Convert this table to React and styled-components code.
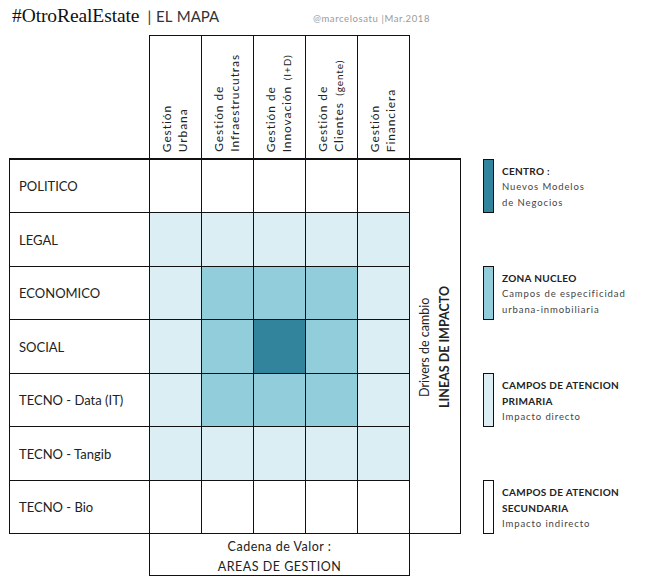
import React from 'react';
import styled, { createGlobalStyle } from 'styled-components';

const GlobalStyle = createGlobalStyle`
    html, body{
        margin:0;
        padding:0;
        background:#fff;
    }
    *{ box-sizing:border-box; }
`

const ROW_TEMPLATE = '53px 54px 53px 54px 53px 54px 53px';
const FILL = { w:'#ffffff', l:'#DAEEF3', m:'#92CDDC', d:'#31849B' };
const LINE = '#111';

const Page = styled.div`
    width:650px;
    height:580px;
    font-family:Lato, "Open Sans", sans-serif;
    color:#222;
    overflow:hidden;
`
const TopBar = styled.header`
    height:35px;
    width:430px;
    padding:5px 0 0 12px;
    display:flex;
    align-items:baseline;
`
const Title = styled.h1`
    margin:0;
    font-family:"Liberation Serif", serif;
    font-weight:400;
    font-size:19.5px;
    color:#111;
    letter-spacing:-0.1px;
`
const Subtitle = styled.span`
    margin-left:8px;
    font-size:15px;
    color:#333;
    word-spacing:1px;
`
const Credit = styled.span`
    margin-left:auto;
    font-size:9.5px;
    color:#9a9a9a;
    letter-spacing:0.6px;
`
const Main = styled.main`
    display:flex;
    padding-left:9px;
`
const Matrix = styled.section`
    display:flex;
    flex-direction:column;
    width:452px;
`
const HeadRow = styled.div`
    margin-left:140px;
    width:261px;
    height:123px;
    display:flex;
    border-top:1px solid ${LINE};
    border-right:1px solid ${LINE};
`
const HeadCell = styled.div`
    width:52px;
    border-left:1px solid ${LINE};
    display:flex;
    align-items:flex-end;
    justify-content:center;
    padding:0 1px 6px 0;
`
const Rotated = styled.span`
    writing-mode:vertical-rl;
    transform:rotate(180deg);
    font-size:${p => p.$size || 11}px;
    line-height:${p => p.$lh || 16}px;
    letter-spacing:${p => p.$ls || 0}px;
    text-align:${p => p.$align || 'start'};
    white-space:nowrap;
`
const Small = styled.span`
    font-size:10px;
    margin-inline-start:6px;
`
const Bold = styled.b`
    font-weight:700;
`
const Body = styled.div`
    display:grid;
    grid-template-columns:140px repeat(5, 52px) 51px;
    grid-template-rows:${ROW_TEMPLATE};
    border-top:2px solid ${LINE};
    border-left:1px solid ${LINE};
`
const Label = styled.div`
    display:flex;
    align-items:center;
    padding-left:9px;
    font-size:13px;
    color:#222;
    border-right:1px solid ${LINE};
    border-bottom:1px solid ${LINE};
`
const Cell = styled.div`
    background:${p => FILL[p.$fill]};
    border-right:1px solid ${LINE};
    border-bottom:1px solid ${LINE};
`
const Drivers = styled.div`
    grid-column:7;
    grid-row:1 / span 7;
    display:flex;
    align-items:center;
    justify-content:center;
    border-right:1px solid ${LINE};
    border-bottom:1px solid ${LINE};
`
const Footer = styled.div`
    margin-left:140px;
    width:261px;
    height:42px;
    border-left:1px solid ${LINE};
    border-right:1px solid ${LINE};
    border-bottom:1px solid ${LINE};
    display:flex;
    flex-direction:column;
    align-items:center;
    justify-content:center;
    font-size:12.5px;
    line-height:20px;
    letter-spacing:0.5px;
    color:#222;
    padding-top:5px;
`
const Legend = styled.aside`
    margin-left:22px;
    margin-top:125px;
    display:grid;
    grid-template-rows:${ROW_TEMPLATE};
`
const LegendItem = styled.div`
    grid-row:${p => p.$row};
    display:flex;
    align-items:stretch;
`
const Swatch = styled.div`
    width:11px;
    margin-top:-1px;
    background:${p => FILL[p.$fill]};
    border:1px solid ${LINE};
`
const LegendText = styled.div`
    margin-left:8px;
    padding-top:3px;
    line-height:16px;
`
const LegendTitle = styled.div`
    font-weight:700;
    font-size:10px;
    letter-spacing:0.3px;
    color:#222;
`
const LegendNote = styled.div`
    font-size:9.5px;
    letter-spacing:0.9px;
    color:#444;
`

const heads = [
    [<>Gestión</>, <>Urbana</>],
    [<>Gestión de</>, <>Infraestrucutras</>],
    [<>Gestión de</>, <>Innovación<Small>(I+D)</Small></>],
    [<>Gestión de</>, <>Clientes<Small>(gente)</Small></>],
    [<>Gestión</>, <>Financiera</>],
]

const rows = [
    { label:'POLITICO', fills:'wwwww' },
    { label:'LEGAL', fills:'lllll' },
    { label:'ECONOMICO', fills:'lmmml' },
    { label:'SOCIAL', fills:'lmdml' },
    { label:'TECNO - Data (IT)', fills:'lmmml' },
    { label:'TECNO - Tangib', fills:'lllll' },
    { label:'TECNO - Bio', fills:'wwwww' },
]

const legend = [
    { row:1, fill:'d', title:['CENTRO :'], notes:['Nuevos Modelos', 'de Negocios'] },
    { row:3, fill:'m', title:['ZONA NUCLEO'], notes:['Campos de especificidad', 'urbana-inmobiliaria'] },
    { row:5, fill:'l', title:['CAMPOS DE ATENCION', 'PRIMARIA'], notes:['Impacto directo'] },
    { row:7, fill:'w', title:['CAMPOS DE ATENCION', 'SECUNDARIA'], notes:['Impacto indirecto'] },
]

const App = () => {
    return (
        <>
        <GlobalStyle/>
        <Page>
            <TopBar>
                <Title>#OtroRealEstate</Title>
                <Subtitle>| EL MAPA</Subtitle>
                <Credit>@marcelosatu |Mar.2018</Credit>
            </TopBar>
            <Main>
                <Matrix>
                    <HeadRow>
                        {heads.map((h, key) => (
                            <HeadCell key={key}>
                                <Rotated $size={12} $ls={0.9}>{h[0]}<br/>{h[1]}</Rotated>
                            </HeadCell>
                        ))}
                    </HeadRow>
                    <Body>
                        <Drivers>
                            <Rotated $size={12.5} $lh={20} $align="center">
                                Drivers de cambio<br/><Bold>LINEAS DE IMPACTO</Bold>
                            </Rotated>
                        </Drivers>
                        {rows.map((r, key) => (
                            <React.Fragment key={key}>
                                <Label>{r.label}</Label>
                                {r.fills.split('').map((f, i) => <Cell key={i} $fill={f}/>)}
                            </React.Fragment>
                        ))}
                    </Body>
                    <Footer>
                        <div>Cadena de Valor :</div>
                        <div>AREAS DE GESTION</div>
                    </Footer>
                </Matrix>
                <Legend>
                    {legend.map((item, key) => (
                        <LegendItem key={key} $row={item.row}>
                            <Swatch $fill={item.fill}/>
                            <LegendText>
                                {item.title.map((t, i) => <LegendTitle key={i}>{t}</LegendTitle>)}
                                {item.notes.map((n, i) => <LegendNote key={i}>{n}</LegendNote>)}
                            </LegendText>
                        </LegendItem>
                    ))}
                </Legend>
            </Main>
        </Page>
        </>
    )
}

export default App;
